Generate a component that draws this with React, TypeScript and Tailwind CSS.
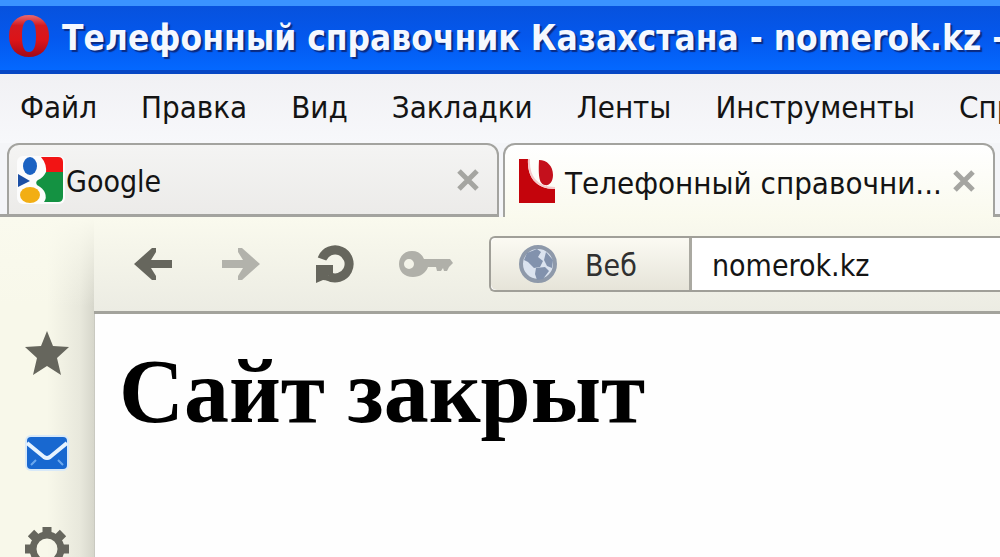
import type { ReactNode } from "react";

const menuItems = ["Файл", "Правка", "Вид", "Закладки", "Ленты", "Инструменты", "Справка"];

function OperaIcon() {
  return (
    <svg viewBox="0 0 42 44" className="h-11 w-[42px] shrink-0" aria-hidden="true">
      <defs>
        <linearGradient id="opera" x1="0" y1="0" x2="0" y2="1">
          <stop offset="0" stopColor="#e86a70" />
          <stop offset="0.25" stopColor="#d41a20" />
          <stop offset="0.6" stopColor="#dc1418" />
          <stop offset="1" stopColor="#a00a1a" />
        </linearGradient>
      </defs>
      <path
        fill="url(#opera)"
        fillRule="evenodd"
        d="M21 1C33 1 41 9 41 22S33 43 21 43 1 35 1 22 9 1 21 1zM21 6c-5 0-7 6-7 16s2 16 7 16 7-6 7-16-2-16-7-16z"
      />
    </svg>
  );
}

function GoogleIcon() {
  return (
    <svg viewBox="0 0 48 48" className="size-12 shrink-0" aria-hidden="true">
      <rect width="48" height="48" rx="6" fill="#fcfcfc" />
      <path fill="#f21414" d="M24 1h17q5 0 5 5v11H29q1-9-5-16z" />
      <path fill="#149242" d="M46 16v25q0 5-5 5H27q3-4 1-9-2-5-8-8-2-3 1-5 5-2 8-8z" />
      <ellipse cx="13" cy="10" rx="7" ry="9" fill="#1b62c2" />
      <path fill="#1c4fa5" d="M1 18l12 7-12 6z" />
      <ellipse cx="13" cy="39" rx="10" ry="8" fill="#f2ae14" />
    </svg>
  );
}

function SiteIcon() {
  return (
    <svg viewBox="0 0 36 44" className="h-11 w-9 shrink-0" aria-hidden="true">
      <path fill="#c4040c" d="M0 0h9c-1 17 7 30 27 30v14H0z" />
      <path fill="#c4101c" d="M20 1c8 0 14 6 14 15 0 7-4 11-8 10-5-1-7-6-6-25z" />
      <path fill="none" stroke="#f5c9ca" strokeWidth="2" d="M10 0c-1 17 7 29 26 29" />
    </svg>
  );
}

function Tab({ title, icon, active }: { title: string; icon: ReactNode; active?: boolean }) {
  return (
    <div
      className={`flex h-[74px] min-w-0 items-center rounded-t-xl border-2 border-[#a3a39f] ${
        active
          ? "border-b-0 bg-linear-to-b from-white to-[#fafaee] pr-[18px] pl-[14px]"
          : "border-b-[3px] bg-linear-to-b from-[#f4f4f3] to-[#ecebe9] pr-[18px] pl-2"
      }`}
    >
      <button
        type="button"
        className={`flex min-w-0 flex-1 items-center ${active ? "gap-2.5 text-[31px]" : "gap-px"}`}
      >
        {icon}
        <span className="pt-1 whitespace-nowrap">{title}</span>
      </button>
      <button type="button" aria-label="Закрыть вкладку" className="shrink-0">
        <svg viewBox="0 0 22 22" className="size-[22px]" aria-hidden="true">
          <path fill="none" stroke="#a5a5a1" strokeWidth="5" d="M2 2l18 18M20 2L2 20" />
        </svg>
      </button>
    </div>
  );
}

function Toolbar() {
  return (
    <div className="flex h-[97px] items-center border-b-[3px] border-[#a3a39c] bg-linear-to-b from-[#fafaee] to-[#ecece3] pl-10">
      <div className="flex shrink-0 items-center">
        <button type="button" aria-label="Назад" className="mr-[50px]">
          <svg viewBox="0 0 38 32" className="h-8 w-[38px]" aria-hidden="true">
            <path fill="#66665d" d="M0 16L18 0h4v4l-5 8h21v8H17l5 8v4h-4z" />
          </svg>
        </button>
        <button type="button" aria-label="Вперёд" className="mr-[54px]">
          <svg viewBox="0 0 38 32" className="h-8 w-[38px]" aria-hidden="true">
            <path fill="#b2b2ab" d="M38 16L20 0h-4v4l5 8H0v8h21l-5 8v4h4z" />
          </svg>
        </button>
        <button type="button" aria-label="Обновить" className="mr-[45px]">
          <svg viewBox="0 0 40 40" className="size-10" aria-hidden="true">
            <path fill="none" stroke="#66665d" strokeWidth="9" d="M8 15A14 14 0 1 1 14 32" />
            <path fill="#66665d" d="M2 21h17v8l-5 3 4 5-9-1-7 3z" />
          </svg>
        </button>
        <button type="button" aria-label="Пароли" className="mr-9">
          <svg viewBox="0 0 54 28" className="h-7 w-[54px]" aria-hidden="true">
            <path
              fill="#b0b0a9"
              fillRule="evenodd"
              d="M13 1c6 0 10 3 12 8h26l3 4-4 4-2 4h-3l-1-3-2 3h-4l-1-4h-8c-2 6-8 10-15 10C5 27 0 21 0 14S5 1 13 1zM10 9a5 5 0 1 0 0 10 5 5 0 0 0 0-10z"
            />
          </svg>
        </button>
      </div>
      <div className="flex h-14 min-w-0 flex-1 rounded-l-md border-2 border-r-0 border-[#a09f98] bg-white">
        <button
          type="button"
          className="flex w-[201px] shrink-0 items-center gap-7 rounded-l-md border-r-[3px] border-[#aaa9a1] bg-linear-to-b from-[#fbfaf3] to-[#e6e4d9] pl-7 text-[#303030]"
        >
          <svg viewBox="0 0 38 38" className="size-[38px]" aria-hidden="true">
            <circle cx="19" cy="19" r="17" fill="#dbe3ef" stroke="#8e99aa" strokeWidth="4" />
            <path fill="#8292ad" d="M8 8l10-4 4 3-3 5 5 4-3 6-6 1-6-6-4-2z" />
            <path fill="#8292ad" d="M27 7l7 8-1 8-5-2-3-6z" />
            <path fill="#8292ad" d="M17 23l9-1 4 4-6 8-6 1-2-6z" />
          </svg>
          <span className="pt-1">Веб</span>
        </button>
        <input
          type="text"
          aria-label="Адрес"
          defaultValue="nomerok.kz"
          className="min-w-0 flex-1 bg-white px-5 pt-1 outline-none"
        />
      </div>
    </div>
  );
}

function Sidebar() {
  return (
    <aside className="flex w-[94px] shrink-0 flex-col items-center bg-[linear-gradient(to_bottom,#fafaee,#fafaee00_90px),linear-gradient(to_right,#f8f8ea_50%,#e8e8dc_85%,#d6d6cb)] pt-[114px]">
      <button type="button" aria-label="Закладки" className="mb-[60px]">
        <svg viewBox="0 0 44 44" className="size-11" aria-hidden="true">
          <path fill="#66665d" d="M22 0l6 15 16 1-12 11 4 17-14-9-14 9 4-17L0 16l16-1z" />
        </svg>
      </button>
      <button type="button" aria-label="Почта" className="mb-[56px]">
        <svg viewBox="0 0 44 36" className="h-9 w-11" aria-hidden="true">
          <rect width="44" height="36" rx="6" fill="#d8e9f8" />
          <rect x="2" y="2" width="40" height="32" rx="4" fill="#1868d0" />
          <path fill="none" stroke="#e6f3ff" strokeWidth="4" d="M2 8l17 14q3 2 6 0L42 8" />
          <path fill="none" stroke="#6ba8ee" strokeWidth="2" d="M6 30l5-5M38 30l-5-5" />
        </svg>
      </button>
      <button type="button" aria-label="Настройки">
        <svg viewBox="0 0 44 44" className="size-11" aria-hidden="true">
          <circle cx="22" cy="22" r="14" fill="none" stroke="#66665d" strokeWidth="7" />
          <path
            stroke="#66665d"
            strokeWidth="9"
            d="M22 0v7M22 37v7M0 22h7M37 22h7M6 6l5 5M33 33l5 5M38 6l-5 5M11 33l-5 5"
          />
        </svg>
      </button>
    </aside>
  );
}

export default function App() {
  return (
    <div className="flex h-screen flex-col overflow-hidden bg-white font-['DejaVu_Sans_Condensed','DejaVu_Sans',sans-serif] text-[30px] leading-9 text-[#141414]">
      {/* Window title */}
      <header className="flex h-[74px] shrink-0 items-center gap-3 overflow-hidden border-t-[6px] border-b-4 border-t-[#3a93ff] border-b-[#0747c4] bg-linear-to-b from-[#0752dd] via-[#0458ee] to-[#0468ff] pr-1 pb-1 pl-2">
        <OperaIcon />
        <div className="pt-1 text-[35px] font-bold whitespace-nowrap text-[#f4f8ff] [text-shadow:2px_2px_1px_#0a2a80]">
          Телефонный справочник Казахстана - nomerok.kz -
        </div>
      </header>

      <nav className="flex h-[69px] shrink-0 items-center gap-11 overflow-hidden bg-linear-to-b from-[#f1f1f4] to-[#f7f8fb] pb-1 pl-5 text-[31px]">
        {menuItems.map((item) => (
          <button key={item} type="button" className="shrink-0">
            {item}
          </button>
        ))}
      </nav>

      {/* Tab strip */}
      <div className="flex h-[74px] shrink-0 items-end bg-[#f4f5f8]">
        <div className="w-[7px] self-stretch border-b-[3px] border-[#a3a39f]" />
        <div className="grid min-w-0 flex-1 grid-cols-2 gap-1">
          <Tab title="Google" icon={<GoogleIcon />} />
          <Tab title="Телефонный справочни..." icon={<SiteIcon />} active />
        </div>
        <div className="w-[5px] self-stretch border-b-[3px] border-[#a3a39f]" />
      </div>

      <div className="flex min-h-0 flex-1">
        <Sidebar />
        <div className="flex min-w-0 flex-1 flex-col">
          <Toolbar />
          <main className="flex-1 border-l border-[#c9c9c0] bg-[#fefefe] px-6 pt-7">
            <h1 className="font-['Liberation_Serif',serif] text-[90px] leading-[100px] font-bold whitespace-nowrap text-black">
              Сайт закрыт
            </h1>
          </main>
        </div>
      </div>
    </div>
  );
}
